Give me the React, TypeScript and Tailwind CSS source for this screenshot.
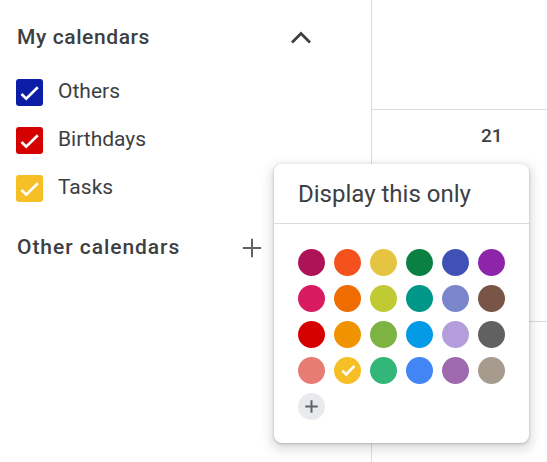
import type { ReactNode } from "react";

const calendars = [
  { name: "Others", color: "bg-[#0b1ca6]" },
  { name: "Birthdays", color: "bg-[#d50000]" },
  { name: "Tasks", color: "bg-[#f6bf26]" },
];

const swatches = [
  ["#ad1457", "#f4511e", "#e4c441", "#0b8043", "#3f51b5", "#8e24aa"],
  ["#d81b60", "#ef6c00", "#c0ca33", "#009688", "#7986cb", "#795548"],
  ["#d50000", "#f09300", "#7cb342", "#039be5", "#b39ddb", "#616161"],
  ["#e67c73", "#f6bf26", "#33b679", "#4285f4", "#9e69af", "#a79b8e"],
];

function Check() {
  return (
    <svg viewBox="0 0 27 27" className="h-[27px] w-[27px]">
      <path d="M5.5 15 L10.2 19.6 L21.8 8.2" fill="none" stroke="white" strokeWidth="2.6" />
    </svg>
  );
}

function Plus({ size, stroke = 2 }: { size: number; stroke?: number }) {
  return (
    <svg viewBox="0 0 24 24" width={size} height={size}>
      <path d="M12 2v20M2 12h20" stroke="#5f6368" strokeWidth={stroke * (24 / size)} fill="none" />
    </svg>
  );
}

function Row({ children }: { children: ReactNode }) {
  return <div className="flex h-[48px] items-center">{children}</div>;
}

export default function App() {
  return (
    <div
      className="relative flex h-[462px] w-[547px] overflow-hidden bg-white text-[#3c4043]"
      style={{ fontFamily: "Roboto, 'Noto Sans', sans-serif" }}
    >
      {/* sidebar */}
      <div className="w-[371px] pt-[14px] pl-[16px]">
        <Row>
          <div className="flex w-[297px] items-center justify-between">
            <span className="pl-[1px] text-[21px] font-medium tracking-[0.6px]">My calendars</span>
            <svg viewBox="0 0 24 24" className="h-[24px] w-[24px]">
              <path d="M3 16.5 L12 7.5 L21 16.5" fill="none" stroke="#3c4043" strokeWidth="2.8" />
            </svg>
          </div>
        </Row>
        <div className="mt-[6px]">
          {calendars.map((c) => (
            <Row key={c.name}>
              <div className={`h-[27px] w-[27px] rounded-[3px] ${c.color}`}>
                <Check />
              </div>
              <span className="ml-[15px] text-[21px]">{c.name}</span>
            </Row>
          ))}
        </div>
        <div className="mt-[12px]">
          <Row>
            <div className="flex w-[247px] items-center justify-between">
              <span className="pl-[1px] text-[21px] font-medium tracking-[0.95px]">Other calendars</span>
              <Plus size={22} />
            </div>
          </Row>
        </div>
      </div>

      {/* calendar grid */}
      <div className="flex flex-1 flex-col border-l border-[#dadce0]">
        <div className="h-[110px] border-b border-[#dadce0]" />
        <div className="h-[212px] border-b border-[#dadce0] pl-[109px] pt-[12px]">
          <span className="text-[19px] font-medium">21</span>
        </div>
        <div className="flex-1" />
      </div>

      {/* popup */}
      <div className="absolute left-[274px] top-[164px] w-[255px] rounded-[8px] bg-white shadow-[0_1px_3px_0_rgba(60,64,67,0.3),0_4px_10px_4px_rgba(60,64,67,0.15)]">
        <div className="flex h-[60px] items-center border-b border-[#dadce0] pl-[24px] text-[24px]">
          Display this only
        </div>
        <div className="grid grid-cols-[repeat(6,27px)] gap-[9px] pb-[23px] pl-[24px] pt-[25px]">
          {swatches.flat().map((c, i) => (
            <div
              key={i}
              className="flex h-[27px] w-[27px] items-center justify-center rounded-full"
              style={{ background: c }}
            >
              {i === 19 && (
                <svg viewBox="0 0 27 27" className="h-[27px] w-[27px]">
                  <path d="M8.3 13.6 L12.2 17.4 L20.4 9" fill="none" stroke="white" strokeWidth="2.6" />
                </svg>
              )}
            </div>
          ))}
          <div className="flex h-[27px] w-[27px] items-center justify-center rounded-full bg-[#e8eaed]">
            <Plus size={15} />
          </div>
        </div>
      </div>
    </div>
  );
}
